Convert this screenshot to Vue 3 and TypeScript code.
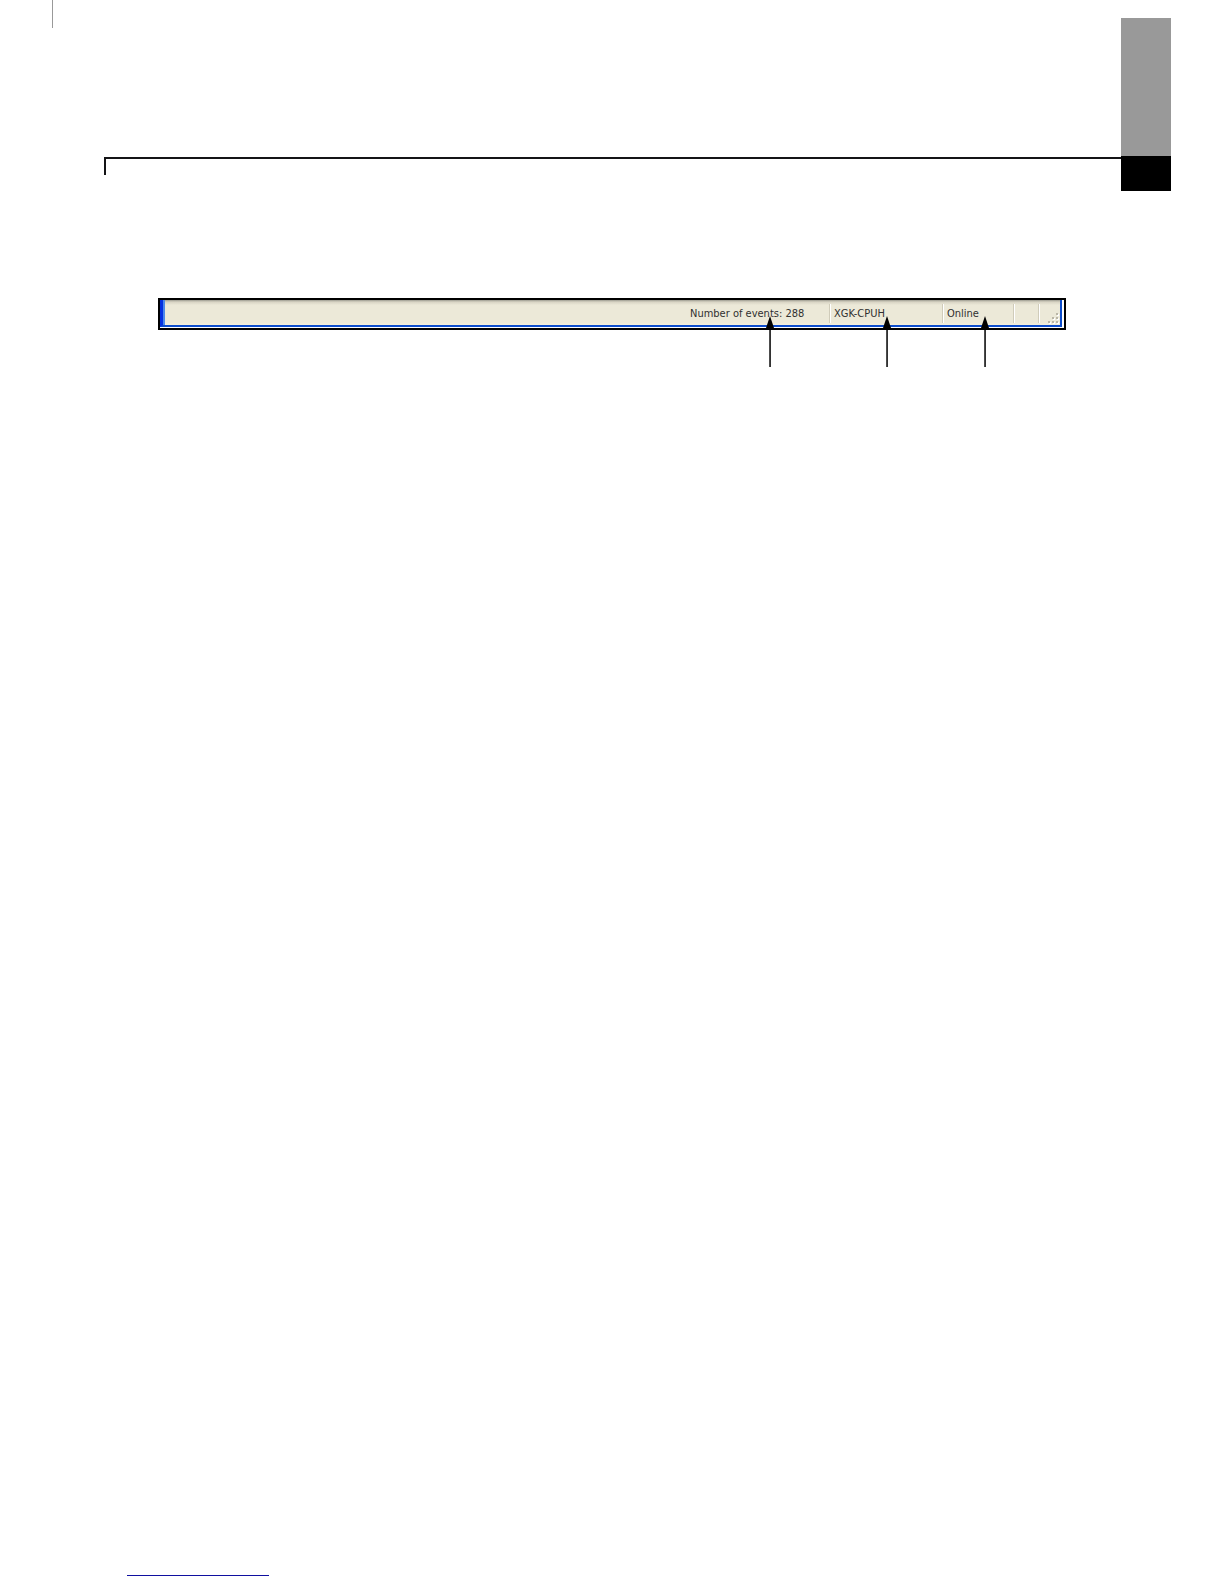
<script setup lang="ts">
interface Pane {
  name: string
  text: string
}

const panes: Pane[] = [
  { name: 'events', text: 'Number of events: 288' },
  { name: 'cpu', text: 'XGK-CPUH' },
  { name: 'mode', text: 'Online' },
]

const gripDots: [number, number][] = [
  [9, 0],
  [5, 4],
  [9, 4],
  [1, 8],
  [5, 8],
  [9, 8],
]
</script>

<template>
  <div class="page">
    <header class="head">
      <div class="margin-mark"></div>
      <div class="rule"></div>
      <div class="tab">
        <div class="tab-grey"></div>
        <div class="tab-black"></div>
      </div>
    </header>

    <main class="content">
      <div class="figure">
        <div class="window-edge">
          <div class="statusbar" role="status">
            <div v-for="pane in panes" :key="pane.name" class="pane" :class="pane.name">
              <span>{{ pane.text }}</span>
              <svg class="arrow" width="10" height="51" viewBox="0 0 10 51" aria-hidden="true">
                <path d="M5 0 9 12H1Z" />
                <rect x="4.3" y="10" width="1.5" height="41" />
              </svg>
            </div>
            <div class="pane blank"></div>
            <div class="pane grip">
              <svg width="13" height="12" viewBox="0 0 13 12" aria-hidden="true">
                <g v-for="([x, y], i) in gripDots" :key="i">
                  <rect :x="x + 1" :y="y + 1" width="2" height="2" fill="#fff" />
                  <rect :x="x" :y="y" width="2" height="2" fill="#bab6a6" />
                </g>
              </svg>
            </div>
          </div>
        </div>
      </div>
    </main>

    <footer class="foot">
      <a class="foot-link" href="#" aria-label="Home"></a>
    </footer>
  </div>
</template>

<style>
body {
  margin: 0;
  background: #fff;
}
</style>

<style scoped>
.page {
  display: flex;
  flex-direction: column;
  box-sizing: border-box;
  min-height: 100vh;
  font-family: "DejaVu Sans Condensed", "DejaVu Sans", sans-serif;
}

.head {
  display: flex;
  align-items: flex-start;
  padding: 0 53px 0 52px;
}

.margin-mark {
  width: 1px;
  height: 28px;
  background: #999;
}

.rule {
  flex: 1;
  height: 16px;
  margin: 157px 0 0 51px;
  border-top: 2px solid #141416;
  border-left: 2px solid #141416;
}

.tab {
  width: 50px;
  margin-top: 18px;
}

.tab-grey {
  height: 138px;
  background: #999;
}

.tab-black {
  height: 35px;
  background: #000;
}

.content {
  flex: 1;
  padding: 107px 158px 0;
}

.figure {
  border: 2px solid #000;
}

.window-edge {
  margin: 0 2px 1px 0;
  border: solid #0c4ccc;
  border-width: 0 2px 2px 3px;
  border-left-color: #0430e0;
}

.statusbar {
  display: flex;
  justify-content: flex-end;
  height: 25px;
  box-sizing: border-box;
  padding-top: 2px;
  border-left: 2px solid #4c88ec;
  background: linear-gradient(#9d9b90 0, #d8d4c4 2px, #ece9d8 5px, #ece9d8 22px, #f3eedc 100%);
  color: #303030;
  font-size: 11px;
  line-height: 24px;
  white-space: nowrap;
}

.pane {
  position: relative;
  box-sizing: border-box;
  padding-left: 4px;
}

.pane + .pane::before {
  content: "";
  position: absolute;
  top: 2px;
  bottom: 2px;
  left: -1px;
  width: 1px;
  background: #d0ccba;
  border-right: 1px solid #fff;
}

.events {
  width: 144px;
}

.cpu {
  width: 113px;
}

.mode {
  width: 71px;
}

.blank {
  width: 25px;
}

.grip {
  width: 21px;
}

.grip svg {
  position: absolute;
  right: 0;
  bottom: 0;
}

.arrow {
  position: absolute;
  top: 14px;
  fill: #000;
}

.events .arrow {
  left: 79px;
}

.cpu .arrow {
  left: 52px;
}

.mode .arrow {
  left: 37px;
}

.foot {
  padding: 0 127px 8px;
}

.foot-link {
  display: block;
  width: 142px;
  height: 16px;
  box-sizing: border-box;
  border-bottom: 1px solid #1010a0;
}
</style>
